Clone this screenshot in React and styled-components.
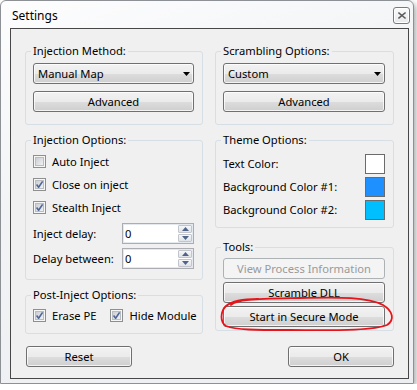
import React from "react";
import styled, { createGlobalStyle } from "styled-components";

const GlobalStyle = createGlobalStyle`
  html, body {
    margin: 0;
    padding: 0;
    background: #ffffff;
  }
  body {
    font-family: "Noto Sans", "Segoe UI", sans-serif;
    font-size: 11.2px;
    color: #000;
  }
  * {
    box-sizing: border-box;
  }
`;

function CheckIcon({ checked }) {
  return (
    <svg width="13" height="13" viewBox="0 0 13 13">
      <defs>
        <linearGradient id="cbfill" x1="0" y1="0" x2="1" y2="1">
          <stop offset="0" stopColor="#c9ccd1" />
          <stop offset="1" stopColor="#f3f3f3" />
        </linearGradient>
      </defs>
      <rect x="0.5" y="0.5" width="12" height="12" fill="#f6f6f6" stroke="#8e8f8f" />
      <rect x="2.5" y="2.5" width="8" height="8" fill="url(#cbfill)" stroke="#b9bcc1" />
      {checked && (
        <path
          d="M3.6 6.6 L5.6 9.2 L9.6 3.4"
          fill="none"
          stroke="#4d6699"
          strokeWidth="1.6"
          strokeLinejoin="round"
        />
      )}
    </svg>
  );
}

function Check({ label, checked }) {
  return (
    <CheckRow>
      <CheckIcon checked={checked} />
      <span>{label}</span>
    </CheckRow>
  );
}

function Combo({ value }) {
  return (
    <ComboBox>
      <span>{value}</span>
      <svg width="7" height="4" viewBox="0 0 7 4">
        <path d="M0 0 H7 L3.5 4 Z" fill="#000" />
      </svg>
    </ComboBox>
  );
}

function Spin({ label, value }) {
  return (
    <SpinRow>
      <span>{label}</span>
      <SpinField>
        <span>{value}</span>
        <SpinButtons>
          <SpinBtn>
            <svg width="7" height="4" viewBox="0 0 7 4">
              <path d="M0 4 H7 L3.5 0 Z" fill="#4f6488" />
            </svg>
          </SpinBtn>
          <SpinBtn>
            <svg width="7" height="4" viewBox="0 0 7 4">
              <path d="M0 0 H7 L3.5 4 Z" fill="#4f6488" />
            </svg>
          </SpinBtn>
        </SpinButtons>
      </SpinField>
    </SpinRow>
  );
}

function Swatch({ label, color }) {
  return (
    <SwatchRow>
      <span>{label}</span>
      <ColorBox $color={color} />
    </SwatchRow>
  );
}

export default function App() {
  return (
    <>
      <GlobalStyle />
      <Window>
        <TitleBar>
          <Title>Settings</Title>
          <CloseBtn>
            <svg width="8" height="7" viewBox="0 0 8 7">
              <path
                d="M1 1 L7 6 M7 1 L1 6"
                stroke="#5a5a5a"
                strokeWidth="1.5"
                strokeLinecap="square"
              />
            </svg>
          </CloseBtn>
        </TitleBar>
        <Client>
          <Columns>
            <Column>
              <Group $h={82}>
                <Legend>Injection Method:</Legend>
                <Stack $gap={7} $pt={4}>
                  <Combo value="Manual Map" />
                  <Button>Advanced</Button>
                </Stack>
              </Group>
              <Group $h={148}>
                <Legend>Injection Options:</Legend>
                <Stack $gap={0} $pt={2}>
                  <Check label="Auto Inject" />
                  <Check label="Close on inject" checked />
                  <Check label="Stealth Inject" checked />
                  <Stack $gap={4} $pt={4}>
                    <Spin label="Inject delay:" value="0" />
                    <Spin label="Delay between:" value="0" />
                  </Stack>
                </Stack>
              </Group>
              <Group $h={47}>
                <Legend>Post-Inject Options:</Legend>
                <InlineChecks>
                  <Check label="Erase PE" checked />
                  <Check label="Hide Module" checked />
                </InlineChecks>
              </Group>
            </Column>
            <Column>
              <Group $h={82}>
                <Legend>Scrambling Options:</Legend>
                <Stack $gap={7} $pt={4}>
                  <Combo value="Custom" />
                  <Button>Advanced</Button>
                </Stack>
              </Group>
              <Group $h={96}>
                <Legend>Theme Options:</Legend>
                <Stack $gap={0} $pt={4}>
                  <Swatch label="Text Color:" color="#ffffff" />
                  <Swatch label="Background Color #1:" color="#1e90ff" />
                  <Swatch label="Background Color #2:" color="#00bfff" />
                </Stack>
              </Group>
              <Group $h={92} $mt={4}>
                <Legend>Tools:</Legend>
                <Stack $gap={3} $pt={3}>
                  <Button disabled>View Process Information</Button>
                  <Button>Scramble DLL</Button>
                  <Button>Start in Secure Mode</Button>
                </Stack>
              </Group>
            </Column>
          </Columns>
          <Footer>
            <Button $w={106}>Reset</Button>
            <Button $w={106}>OK</Button>
          </Footer>
          <Scribble viewBox="11 29 397 349" preserveAspectRatio="none">
            <path
              d="M231 305 C236 299 258 299 300 298 C340 297 368 297 383 305 C393 311 395 320 387 325 C373 331 330 330 290 330 C255 330 236 330 226 326 C220 322 220 312 226 306 C232 301 246 299 258 299"
              fill="none"
              stroke="#e8141b"
              strokeWidth="1.8"
              strokeLinecap="round"
            />
          </Scribble>
        </Client>
      </Window>
    </>
  );
}

const Window = styled.div`
  width: 414px;
  height: 384px;
  display: flex;
  flex-direction: column;
  padding: 0 4px 4px 9px;
  border: 1px solid #8d9196;
  border-radius: 6px 6px 0 0;
  background: linear-gradient(160deg, #fdfdfe 0%, #f1f3f5 40%, #eceef1 100%);
  box-shadow: 2px 3px 6px rgba(0, 0, 0, 0.35);
`;

const TitleBar = styled.div`
  height: 27px;
  display: flex;
  align-items: center;
  justify-content: space-between;
  padding: 2px 0 0 2px;
`;

const Title = styled.div`
  font-size: 12px;
  color: #000;
`;

const CloseBtn = styled.div`
  width: 17px;
  height: 17px;
  margin-right: -1px;
  display: flex;
  align-items: center;
  justify-content: center;
  border: 1px solid #77797c;
  border-radius: 3px;
  background: linear-gradient(#fbfbfb, #e6e8eb);
  box-shadow: inset 0 0 0 1px #ffffff;
`;

const Client = styled.div`
  position: relative;
  flex: 1;
  border: 1px solid #474747;
  background: #f0f0f0;
  padding: 14px 13px 0 14px;
`;

const Columns = styled.div`
  display: grid;
  grid-template-columns: 178px 179px;
  column-gap: 12px;
  align-items: start;
`;

const Column = styled.div`
  display: flex;
  flex-direction: column;
  gap: 7px;
`;

const Group = styled.fieldset`
  margin: ${(p) => p.$mt || 0}px 0 0 0;
  height: ${(p) => p.$h}px;
  min-width: 0;
  padding: 0 8px 0 7px;
  border: 1px solid #d5dfe5;
  border-radius: 3px;
`;

const Legend = styled.legend`
  padding: 0 2px;
  margin-left: -2px;
  line-height: 16px;
  color: #000;
`;

const Stack = styled.div`
  display: flex;
  flex-direction: column;
  gap: ${(p) => p.$gap}px;
  padding-top: ${(p) => p.$pt}px;
`;

const Button = styled.button`
  height: 21px;
  width: ${(p) => (p.$w ? `${p.$w}px` : "100%")};
  padding: 0;
  font-family: inherit;
  font-size: 11.2px;
  color: #000;
  border: 1px solid #707070;
  border-radius: 3px;
  background: linear-gradient(#f2f2f2 0%, #ebebeb 50%, #dddddd 51%, #cfcfcf 100%);
  box-shadow: inset 0 0 0 1px rgba(255, 255, 255, 0.75);

  &:disabled {
    color: #9a9a9a;
    border-color: #adb2b5;
    background: #f4f4f4;
    box-shadow: none;
  }
`;

const ComboBox = styled.div`
  height: 21px;
  display: flex;
  align-items: center;
  justify-content: space-between;
  padding: 0 3px 0 4px;
  border: 1px solid #707070;
  border-radius: 3px;
  background: linear-gradient(#f2f2f2 0%, #ebebeb 50%, #dddddd 51%, #cfcfcf 100%);
  box-shadow: inset 0 0 0 1px rgba(255, 255, 255, 0.75);
`;

const CheckRow = styled.div`
  height: 23px;
  display: flex;
  align-items: center;
  gap: 6px;
  white-space: nowrap;
  flex-shrink: 0;
  svg {
    flex-shrink: 0;
  }
`;

const InlineChecks = styled.div`
  display: flex;
  gap: 14px;
  padding-top: 1px;
`;

const SpinRow = styled.div`
  height: 21px;
  display: flex;
  align-items: center;
  justify-content: space-between;
`;

const SpinField = styled.div`
  width: 72px;
  height: 21px;
  display: flex;
  align-items: center;
  justify-content: space-between;
  padding: 0 1px 0 2px;
  background: #fff;
  border: 1px solid #abadb3;
  box-shadow: inset 0 0 0 1px #e3e9ef;
`;

const SpinButtons = styled.div`
  display: flex;
  flex-direction: column;
  gap: 1px;
`;

const SpinBtn = styled.div`
  width: 14px;
  height: 8px;
  display: flex;
  align-items: center;
  justify-content: center;
  border: 1px solid #c2c6cc;
  border-radius: 1px;
  background: linear-gradient(#f6f7f8, #dfe3e8);
`;

const SwatchRow = styled.div`
  height: 23px;
  display: flex;
  align-items: center;
  justify-content: space-between;
`;

const ColorBox = styled.div`
  width: 20px;
  height: 20px;
  border: 1px solid #6b6b6b;
  background: ${(p) => p.$color};
`;

const Footer = styled.div`
  display: flex;
  justify-content: space-between;
  margin-top: 12px;
  padding: 0 1px;
`;

const Scribble = styled.svg`
  position: absolute;
  left: 0;
  top: 0;
  width: 100%;
  height: 100%;
  pointer-events: none;
`;
